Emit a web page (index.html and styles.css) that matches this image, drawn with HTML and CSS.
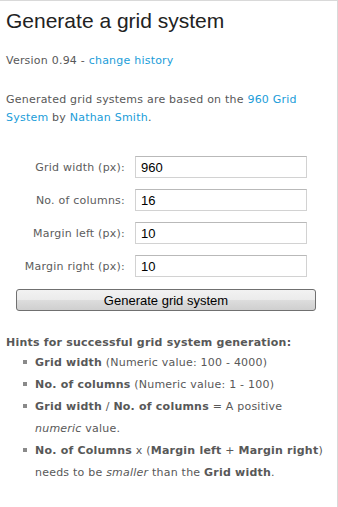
FILE: index.html
```html
<!DOCTYPE html>
<html lang="en">
<head>
  <meta charset="UTF-8">
  <meta name="viewport" content="width=device-width, initial-scale=1">
  <title>Generate a grid system</title>
  <link rel="stylesheet" href="styles.css">
</head>
<body>
  <div class="page">
    <h1>Generate a grid system</h1>
    <p class="version">Version 0.94 - <a href="#">change history</a></p>
    <p class="intro">Generated grid systems are based on the <a href="#">960 Grid System</a> by <a href="#">Nathan Smith</a>.</p>

    <form class="grid-form" action="#">
      <label for="gw">Grid width (px):</label>
      <input id="gw" type="text" value="960">
      <label for="cols">No. of columns:</label>
      <input id="cols" type="text" value="16">
      <label for="ml">Margin left (px):</label>
      <input id="ml" type="text" value="10">
      <label for="mr">Margin right (px):</label>
      <input id="mr" type="text" value="10">
      <button type="button" class="generate">Generate grid system</button>
    </form>

    <h2 class="hints-title">Hints for successful grid system generation:</h2>
    <ul class="hints">
      <li><b>Grid width</b> (Numeric value: 100 - 4000)</li>
      <li><b>No. of columns</b> (Numeric value: 1 - 100)</li>
      <li><b>Grid width</b> / <b>No. of columns</b> = A positive <i>numeric</i> value.</li>
      <li><b>No. of Columns</b> x (<b>Margin left</b> + <b>Margin right</b>) needs to be <i>smaller</i> than the <b>Grid width</b>.</li>
    </ul>
  </div>
</body>
</html>
```

FILE: styles.css
```css
html, body{
  margin: 0;
  padding: 0;
}

body{
  font-family: "DejaVu Sans", Verdana, sans-serif;
  font-size: 11px;
  letter-spacing: 0.22px;
  color: #585858;
  background: #fff;
}

a{
  color: #1a9dd9;
  text-decoration: none;
}

.page{
  box-sizing: border-box;
  min-height: 100vh;
  padding: 7px 6px 30px;
  border-top: 1px solid #d9d9d9;
  border-right: 1px solid #d9d9d9;
}

h1{
  margin: 0;
  font-family: "Liberation Sans", Arial, sans-serif;
  font-size: 21px;
  line-height: 26px;
  font-weight: normal;
  letter-spacing: 0;
  color: #222;
}

.version{
  margin: 18px 0 0;
  line-height: 18px;
}

.intro{
  margin: 21px 0 0;
  line-height: 18px;
}

.grid-form{
  display: grid;
  grid-template-columns: 119px 172px;
  column-gap: 10px;
  row-gap: 11px;
  align-items: center;
  margin-top: 29px;
}

.grid-form label{
  text-align: right;
  color: #5c5c5c;
}

.grid-form input{
  box-sizing: border-box;
  width: 172px;
  height: 22px;
  margin: 0;
  padding: 0 5px;
  border: 1px solid #d2d2d2;
  border-top-color: #b9b9b9;
  font-family: "Liberation Sans", Arial, sans-serif;
  font-size: 13px;
  letter-spacing: 0;
  color: #000;
  outline: none;
}

.generate{
  grid-column: 1 / 3;
  box-sizing: border-box;
  width: 300px;
  height: 22px;
  margin: 1px 0 0 10px;
  padding: 0;
  border: 1px solid #707070;
  border-radius: 3px;
  background: linear-gradient(#f2f2f2 0%, #ebebeb 50%, #dddddd 51%, #cfcfcf 100%);
  font-family: "Liberation Sans", Arial, sans-serif;
  font-size: 13px;
  letter-spacing: 0;
  color: #000;
}

.hints-title{
  margin: 23px 0 0;
  font-size: 11px;
  line-height: 18px;
  font-weight: bold;
  color: #585858;
}

.hints{
  margin: 0;
  padding-left: 29px;
  line-height: 22px;
  list-style: none;
}

.hints li{
  position: relative;
}

.hints li::before{
  content: "";
  position: absolute;
  left: -12px;
  top: 8px;
  width: 4px;
  height: 4px;
  background: #8a8a8a;
}
```
